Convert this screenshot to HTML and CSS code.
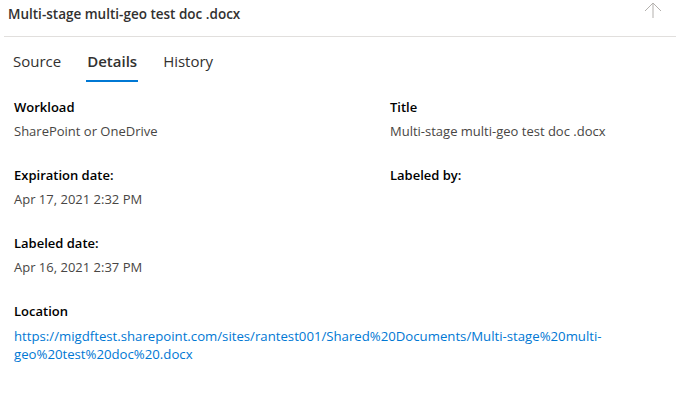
FILE: index.html
```html
<!DOCTYPE html>
<html>
<head>
<meta charset="utf-8">
<link rel="stylesheet" href="styles.css">
</head>
<body>
<div class="panel">
  <div class="header">
    <div class="title">Multi-stage multi-geo test doc .docx</div>
    <svg class="arrow" width="18" height="16" viewBox="0 0 18 16">
      <path d="M9 1 V16 M1 9 L9 1 L17 9" fill="none" stroke="#b3b0ad" stroke-width="1"/>
    </svg>
  </div>
  <div class="tabs">
    <div class="tab">Source</div>
    <div class="tab active">Details</div>
    <div class="tab">History</div>
  </div>
  <div class="content">
    <div class="grid">
      <div class="field">
        <div class="label">Workload</div>
        <div class="value">SharePoint or OneDrive</div>
      </div>
      <div class="field">
        <div class="label">Title</div>
        <div class="value">Multi-stage multi-geo test doc .docx</div>
      </div>
      <div class="field">
        <div class="label">Expiration date:</div>
        <div class="value">Apr 17, 2021 2:32 PM</div>
      </div>
      <div class="field">
        <div class="label">Labeled by:</div>
        <div class="value"></div>
      </div>
      <div class="field">
        <div class="label">Labeled date:</div>
        <div class="value">Apr 16, 2021 2:37 PM</div>
      </div>
      <div class="field"></div>
    </div>
    <div class="location">
      <div class="label">Location</div>
      <a class="link" href="#">https://migdftest.sharepoint.com/sites/rantest001/Shared%20Documents/Multi-stage%20multi-<br>geo%20test%20doc%20.docx</a>
    </div>
  </div>
</div>
</body>
</html>
```

FILE: styles.css
```css
html, body {
  margin: 0;
  padding: 0;
  background: #ffffff;
}
body {
  font-family: "Open Sans", "Liberation Sans", sans-serif;
  font-size: 13px;
  color: #323130;
  width: 676px;
  height: 414px;
  overflow: hidden;
}
.header {
  display: flex;
  justify-content: space-between;
  align-items: flex-start;
  margin-left: 4px;
  padding: 2px 14px 0 4px;
  height: 34px;
  border-bottom: 1px solid #e1dfdd;
}
.title {
  font-size: 13.5px;
  font-weight: 600;
  line-height: 24px;
  color: #323130;
}
.arrow {
  display: block;
}
.tabs {
  display: flex;
  gap: 24px;
  margin-top: 13px;
  padding-left: 12px;
}
.tab {
  font-size: 15px;
  line-height: 22px;
  padding: 0 1px 8px;
  border-bottom: 2px solid transparent;
  color: #323130;
}
.tab.active {
  font-weight: 600;
  border-bottom-color: #0078d4;
}
.content {
  padding: 15px 0 0 14px;
}
.grid {
  display: grid;
  grid-template-columns: 376px 1fr;
}
.field {
  display: flex;
  flex-direction: column;
  gap: 4px;
  height: 68px;
}
.label {
  font-weight: 600;
  line-height: 20px;
  color: #000000;
}
.value {
  line-height: 20px;
  color: #484644;
}
.location {
  display: flex;
  flex-direction: column;
  gap: 6px;
}
.link {
  color: #0078d4;
  text-decoration: none;
  font-size: 13.2px;
  line-height: 18px;
  white-space: nowrap;
}
```
